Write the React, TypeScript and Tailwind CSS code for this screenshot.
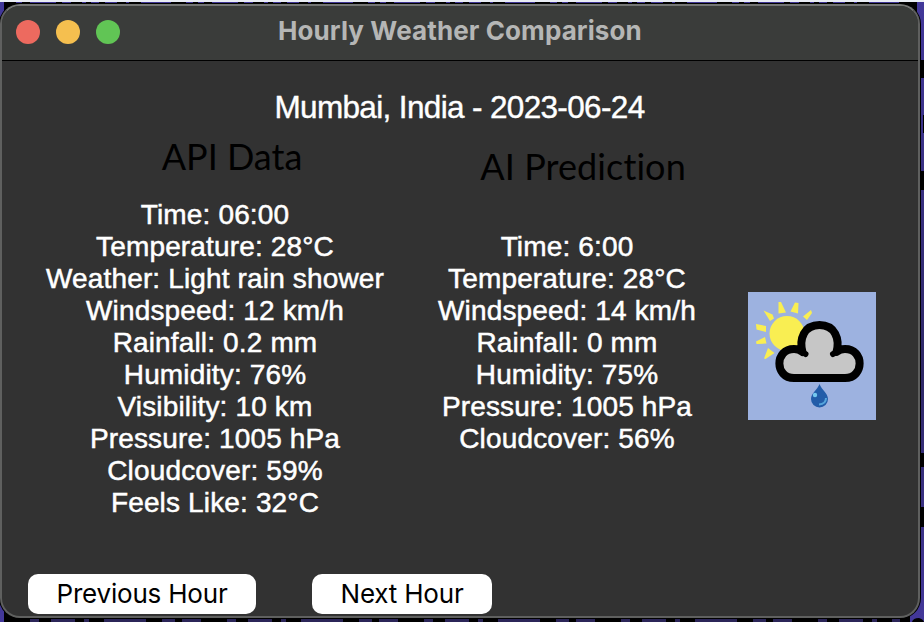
const api = [
  'Time: 06:00',
  'Temperature: 28°C',
  'Weather: Light rain shower',
  'Windspeed: 12 km/h',
  'Rainfall: 0.2 mm',
  'Humidity: 76%',
  'Visibility: 10 km',
  'Pressure: 1005 hPa',
  'Cloudcover: 59%',
  'Feels Like: 32°C',
];
const ai = [
  'Time: 6:00',
  'Temperature: 28°C',
  'Windspeed: 14 km/h',
  'Rainfall: 0 mm',
  'Humidity: 75%',
  'Pressure: 1005 hPa',
  'Cloudcover: 56%',
];

// Slivers of the desktop that stay visible around the window.
function Desktop() {
  return (
    <svg className="absolute inset-0" width="924" height="622" aria-hidden="true">
      <defs>
        <linearGradient id="desk" x1="0" y1="0" x2="0" y2="1">
          <stop offset="0" stopColor="#42389a" />
          <stop offset="0.6" stopColor="#2e2867" />
          <stop offset="1" stopColor="#43389a" />
        </linearGradient>
      </defs>
      <rect width="924" height="622" fill="url(#desk)" />
      <path d="M4 2h907v24H4zM909 2h8v20h-8z" fill="#000" />
      <path d="M16 2.500H905" stroke="#3f3594" strokeWidth="1" strokeDasharray="6 8 26 6 9 11 4 5 8 6 12 9 3 12 30 15 7 5" />
      <path d="M921 60h3v18h-3zM923 115h1v18h-1zM921 171h3v19h-3zM921 453h3v14h-3zM921 507h3v20h-3z" fill="#000" />
      <rect x="4" y="610" width="906" height="12" fill="#000" />
      <path d="M30 620.500H900" stroke="#2b2558" strokeWidth="3" strokeDasharray="9 12 24 9 5 15 42 16 13 7 19 26" />
      <path d="M912 622q1-4 7-4 4 1 5 4z" fill="#000" />
      <rect width="924" height="2" fill="#e9edf4" />
    </svg>
  );
}

function WeatherIcon() {
  return (
    <svg className="mt-[169px] ml-[42px] block h-32 w-32 shrink-0 bg-[#9db2e0]" viewBox="0 0 128 128" aria-label="Light rain shower">
      <g fill="#f9ee52">
        <circle cx="39" cy="41.500" r="17.500" />
        <path d="M30.500 10h2.500l5 10.500-7.500 1zM47 10.500l3.500.5-.5 10.500-7.500-2zM63 18l1 3-5 7-4-3.500zM15.500 18.500l9 4 1.500 4-4 2.500zM8 32l10 2v6l-9.500-2.500zM8 49.500l9-4.500 1.500 6.500-10 .5zM16 66.500l4-10.500 6.500 5-9 6z" />
      </g>
      <path
        d="M46 86c-19.500 0-19.500-29 0-29q5 0 8.500 3C51 47 56 33 71.500 33s20.500 14 17 27q3.500-3 8.500-3c19.500 0 19.500 29 0 29z"
        fill="#c6c6c6"
        stroke="#000"
        strokeWidth="8"
        strokeLinejoin="round"
      />
      <path d="M54 60l3.500 2M88.500 60l-3.500 2" stroke="#000" strokeWidth="6" strokeLinecap="round" />
      <path d="M71.500 92c2 6 8.500 9 8.500 15a8.500 8.500 0 0 1-17 0c0-6 6.500-9 8.500-15z" fill="#225ca8" />
      <path d="M78 106q0 6-7 6.500" fill="none" stroke="#55a5dc" strokeWidth="2" />
      <circle cx="67" cy="103" r="2.200" fill="#74c8ee" />
    </svg>
  );
}

export default function App() {
  return (
    <div className="relative h-[622px] w-[924px] overflow-hidden pt-1 font-['Liberation_Sans',sans-serif]">
      <Desktop />
      <main className="relative flex h-[614px] w-[920px] flex-col overflow-hidden rounded-[20px] border-2 border-[#5f605f] border-t-[#747674] bg-[#323232] shadow-[0_0_0_1px_#000]">
        <header className="flex h-[55px] shrink-0 items-start border-b border-black bg-[#3a3c3a]">
          <div className="flex w-[276px] gap-4 pt-3.5 pl-3.5">
            <span className="h-6 w-6 rounded-full bg-[#ed6a5f]" />
            <span className="h-6 w-6 rounded-full bg-[#f5bf4f]" />
            <span className="h-6 w-6 rounded-full bg-[#61c555]" />
          </div>
          <h1 className="pt-[9px] font-['Inter',sans-serif] text-[26px] leading-[32px] font-bold tracking-[0.1px] whitespace-nowrap text-[#b5b6b5]">Hourly Weather Comparison</h1>
        </header>
        <h2 className="mt-[30px] pr-px text-center text-[31.500px] leading-[32px] tracking-[-0.65px] text-white [-webkit-text-stroke:0.4px_white]">Mumbai, India - 2023-06-24</h2>
        <div className="flex h-[451px] shrink-0">
          <section className="w-[426px] shrink-0 text-center">
            <h3 className="pt-[9px] pl-[34px] font-['Lato',sans-serif] text-[36px] leading-[48px] text-black">API Data</h3>
            <div className="mt-[19px] text-[28px] leading-[32px] tracking-[0.15px] whitespace-nowrap text-white [-webkit-text-stroke:0.5px_white]">
              {api.map((t) => <p key={t}>{t}</p>)}
            </div>
          </section>
          <section className="w-[278px] shrink-0 text-center">
            <h3 className="pt-[19px] pl-[32px] font-['Lato',sans-serif] text-[36px] leading-[48px] tracking-[0.1px] whitespace-nowrap text-black [font-variant-ligatures:none]">AI Prediction</h3>
            <div className="mt-[41px] text-[28px] leading-[32px] tracking-[0.15px] whitespace-nowrap text-white [-webkit-text-stroke:0.5px_white]">
              {ai.map((t) => <p key={t}>{t}</p>)}
            </div>
          </section>
          <WeatherIcon />
        </div>
        <footer className="flex gap-14 pl-[26px] font-['Inter',sans-serif] text-[26px] leading-[39px] tracking-[-0.2px] text-black">
          <button className="h-10 w-[228px] rounded-[10px] bg-white pb-px">Previous Hour</button>
          <button className="h-10 w-[180px] rounded-[10px] bg-white pb-px">Next Hour</button>
        </footer>
      </main>
    </div>
  );
}
